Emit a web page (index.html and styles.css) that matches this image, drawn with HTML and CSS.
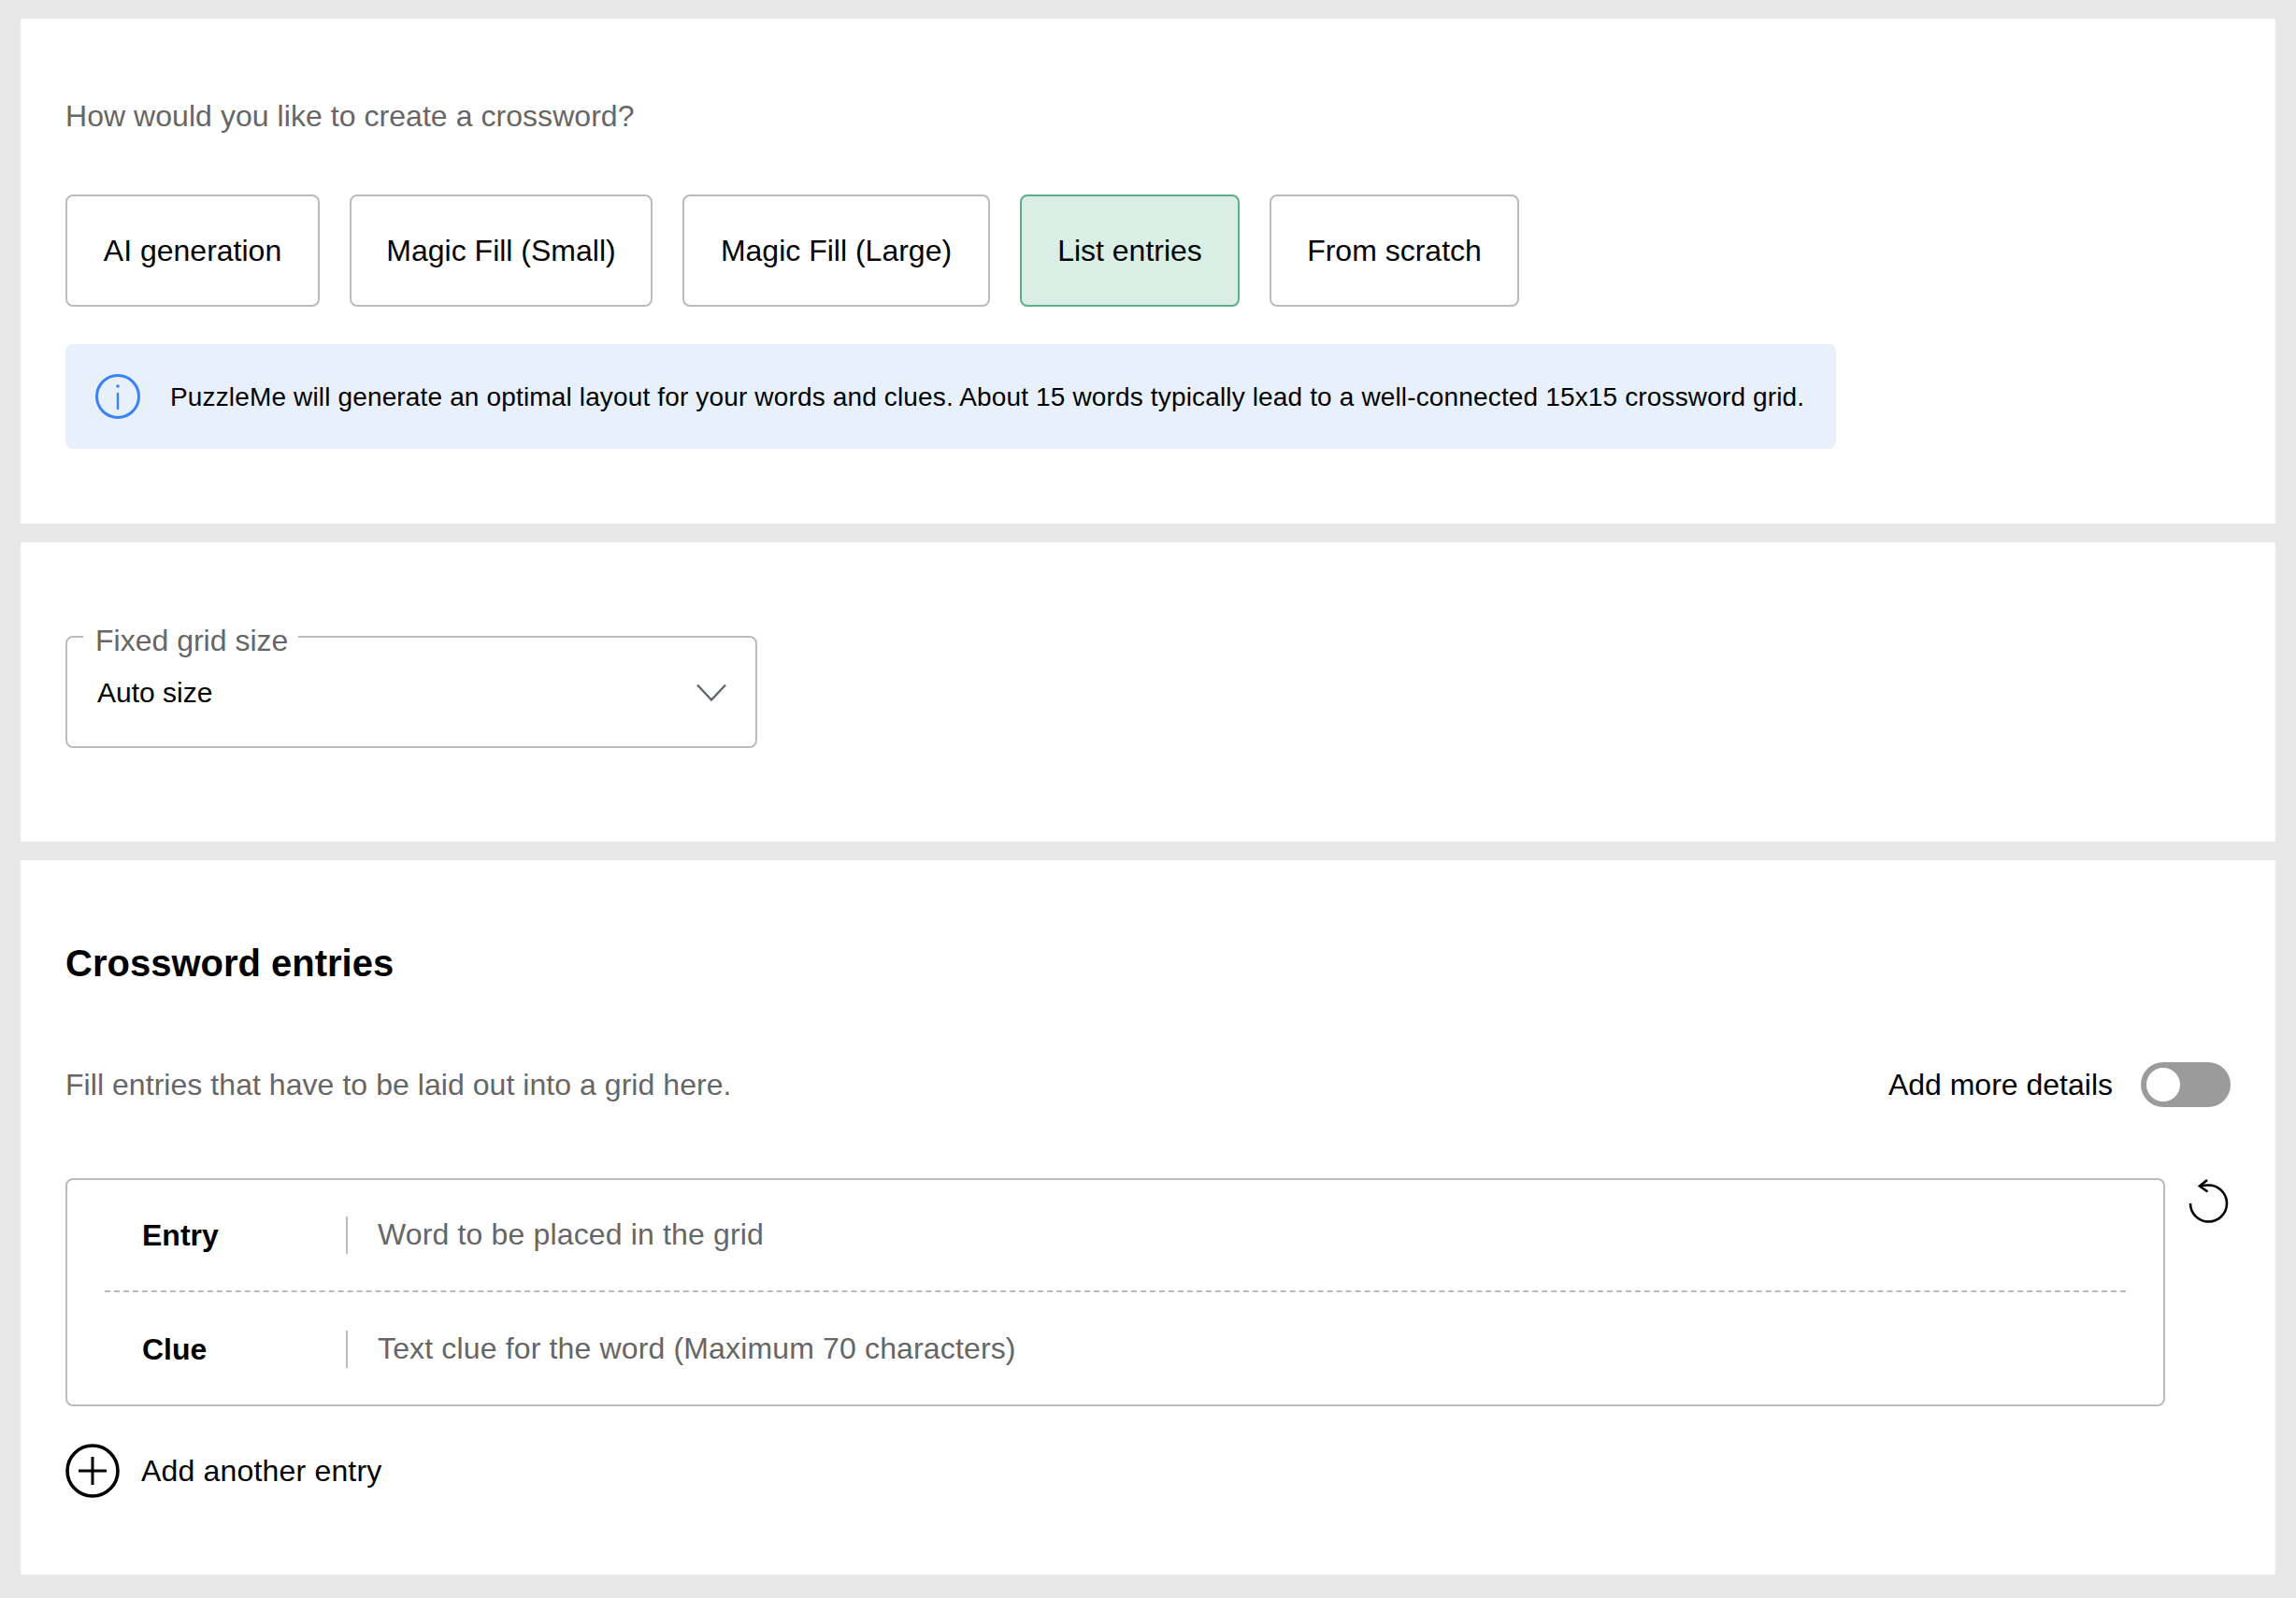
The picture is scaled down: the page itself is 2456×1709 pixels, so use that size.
FILE: index.html
```html
<!DOCTYPE html>
<html lang="en">
<head>
    <meta charset="UTF-8">
    <title>Create a crossword</title>
    <link rel="stylesheet" href="styles.css">
</head>
<body>
    <section class="panel panel-mode">
        <p class="muted mode-title">How would you like to create a crossword?</p>
        <div class="mode-list">
            <button class="mode-btn btn-ai">AI generation</button>
            <button class="mode-btn btn-small">Magic Fill (Small)</button>
            <button class="mode-btn btn-large">Magic Fill (Large)</button>
            <button class="mode-btn btn-list selected">List entries</button>
            <button class="mode-btn btn-scratch">From scratch</button>
        </div>
        <div class="info-box">
            <svg class="info-icon" width="48" height="48" viewBox="0 0 48 48" fill="none" stroke="#3b82f6" stroke-width="3">
                <circle cx="24" cy="24" r="22.5"/>
                <path d="M24 21v16" stroke-width="2.4" stroke-linecap="round"/>
                <circle cx="24" cy="13" r="1.8" fill="#3b82f6" stroke="none"/>
            </svg>
            <span>PuzzleMe will generate an optimal layout for your words and clues. About 15 words typically lead to a well-connected 15x15 crossword grid.</span>
        </div>
    </section>

    <section class="panel panel-size">
        <fieldset class="select-field">
            <legend>Fixed grid size</legend>
            <div class="select-value">
                <span>Auto size</span>
                <svg width="32" height="20" viewBox="0 0 32 20" fill="none" stroke="#5f6670" stroke-width="2.4">
                    <path d="M1 1.5l15 16 15-16"/>
                </svg>
            </div>
        </fieldset>
    </section>

    <section class="panel panel-entries">
        <h2>Crossword entries</h2>
        <div class="entries-bar">
            <p class="muted">Fill entries that have to be laid out into a grid here.</p>
            <div class="details-toggle">
                <span>Add more details</span>
                <div class="toggle"><div class="toggle-knob"></div></div>
            </div>
        </div>
        <div class="entry-wrap">
            <div class="entry-box">
                <div class="entry-row">
                    <div class="entry-label">Entry</div>
                    <div class="entry-input">Word to be placed in the grid</div>
                </div>
                <div class="entry-row">
                    <div class="entry-label">Clue</div>
                    <div class="entry-input">Text clue for the word (Maximum 70 characters)</div>
                </div>
            </div>
            <svg class="reset-icon" width="44" height="48" viewBox="0 0 44 48" fill="none" stroke="#000" stroke-width="2.6">
                <path d="M3 27a19.5 19.5 0 1 0 19.3-19.5c-3.300 0-6.300.3-9.300 1"/>
                <path d="M21 2l-8 6.500 8.500 6"/>
            </svg>
        </div>
        <div class="add-entry">
            <svg width="58" height="58" viewBox="0 0 58 58" fill="none" stroke="#000" stroke-width="3.600">
                <circle cx="29" cy="29" r="27"/>
                <path d="M29 14v30M14 29h30" stroke-width="3"/>
            </svg>
            <span>Add another entry</span>
        </div>
    </section>
</body>
</html>
```

FILE: styles.css
```css
* {
    margin: 0;
    padding: 0;
    box-sizing: border-box;
}

body {
    font-family: 'Liberation Sans', Arial, sans-serif;
    font-size: 32px;
    color: #000;
    background: #e8e8e8;
    padding: 20px 22px 25px;
    display: flex;
    flex-direction: column;
    gap: 20px;
}

.panel {
    background: white;
    padding-left: 48px;
    padding-right: 48px;
}

.muted {
    color: #666;
    letter-spacing: 0.05px;
}

.panel-mode {
    height: 540px;
    padding-top: 84px;
}

.mode-title {
    line-height: 40px;
}

.mode-list {
    display: flex;
    gap: 32px;
    margin-top: 64px;
}

.mode-btn {
    height: 120px;
    font: inherit;
    color: #000;
    background: white;
    border: 2px solid #bbb;
    border-radius: 8px;
}

.btn-ai { width: 272px; }
.btn-small { width: 324px; }
.btn-large { width: 329px; }
.btn-list { width: 235px; }
.btn-scratch { width: 267px; }

.mode-btn.selected {
    background: #dbeee5;
    border-color: #5bb08a;
}

.info-box {
    display: flex;
    align-items: center;
    gap: 32px;
    width: 1894px;
    height: 112px;
    margin-top: 40px;
    padding-left: 32px;
    font-size: 28px;
    letter-spacing: 0.15px;
    background: #e8f0fb;
    border-radius: 8px;
}

.info-box span {
    padding-top: 2px;
}

.info-icon {
    flex-shrink: 0;
}

.panel-size {
    height: 320px;
    padding-top: 77px;
}

.select-field {
    width: 740px;
    height: 143px;
    padding: 0 30px 0 32px;
    border: 2px solid #bbb;
    border-radius: 8px;
}

.select-field legend {
    margin-left: -15px;
    padding: 8px 11px 0 13px;
    line-height: 40px;
    color: #666;
}

.select-value {
    display: flex;
    align-items: center;
    justify-content: space-between;
    height: 72px;
    font-size: 30px;
}

.select-value svg {
    margin-right: 1px;
}

.panel-entries {
    height: 764px;
    padding-top: 86px;
}

.panel-entries h2 {
    font-size: 40px;
    line-height: 48px;
}

.entries-bar {
    display: flex;
    align-items: center;
    justify-content: space-between;
    margin-top: 82px;
    height: 48px;
}

.details-toggle {
    display: flex;
    align-items: center;
    gap: 30px;
}

.toggle {
    width: 96px;
    height: 48px;
    padding: 6px;
    background: #9b9b9b;
    border-radius: 24px;
}

.toggle-knob {
    width: 36px;
    height: 36px;
    background: white;
    border-radius: 50%;
}

.entry-wrap {
    display: flex;
    align-items: flex-start;
    gap: 24px;
    margin-top: 76px;
}

.entry-box {
    width: 2246px;
    height: 244px;
    padding: 0 40px;
    border: 2px solid #bbb;
    border-radius: 8px;
}

.entry-row {
    display: flex;
    align-items: center;
    height: 118px;
}

.entry-row + .entry-row {
    height: 122px;
    padding-top: 2px;
    border-top: 2px dashed #bbb;
}

.entry-label {
    width: 258px;
    padding-left: 40px;
    font-weight: 700;
}

.entry-input {
    height: 40px;
    line-height: 38px;
    padding-left: 32px;
    color: #666;
    letter-spacing: 0.15px;
    border-left: 2px solid #bbb;
}

.add-entry {
    display: flex;
    align-items: center;
    gap: 23px;
    margin-top: 40px;
    letter-spacing: 0.18px;
}
```
